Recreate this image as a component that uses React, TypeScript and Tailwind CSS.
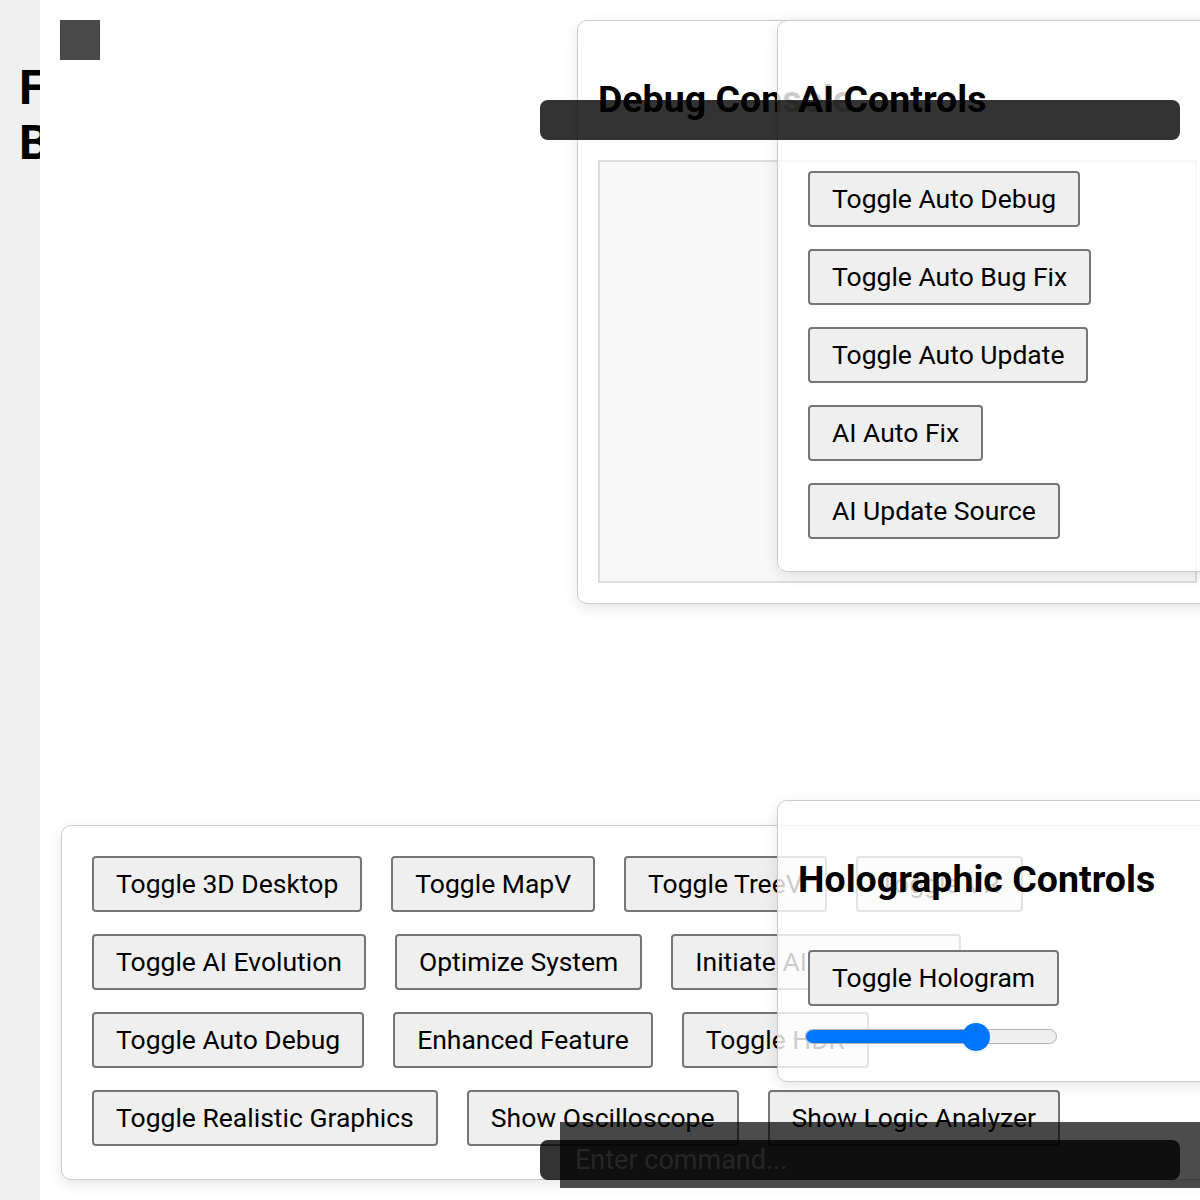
import React from 'react';

const btn =
  'shrink-0 whitespace-nowrap rounded-[4px] border-2 border-[#767676] bg-[#efefef] px-[22px] py-[11px] text-left text-[26.5px] leading-[30px] text-black';

const title = 'whitespace-nowrap text-[37.5px] font-bold leading-[44px]';

const aiButtons = ['Toggle Auto Debug', 'Toggle Auto Bug Fix', 'Toggle Auto Update', 'AI Auto Fix', 'AI Update Source'];

const toolButtons = [
  'Toggle 3D Desktop',
  'Toggle MapV',
  'Toggle TreeV',
  'Toggle VR',
  'Toggle AI Evolution',
  'Optimize System',
  'Initiate AI Singularity',
  'Toggle Auto Debug',
  'Enhanced Feature',
  'Toggle HDR',
  'Toggle Realistic Graphics',
  'Show Oscilloscope',
  'Show Logic Analyzer',
];

// floating window
const Panel = ({ className, children }: { className: string; children: React.ReactNode }) => (
  <section
    className={`absolute flex flex-col rounded-[10px] border border-[#cccccc] px-5 pb-5 pt-[56px] shadow-[0_4px_14px_rgba(0,0,0,0.1)] ${className}`}
  >
    {children}
  </section>
);

export default function App() {
  const hologramLevel = 70;

  return (
    <div className="relative flex h-[1200px] w-full overflow-hidden bg-white font-['Roboto',sans-serif] text-black">
      <aside className="w-[40px] shrink-0 overflow-hidden bg-[#f0f0f0] pl-[19px] pt-[60px]">
        <h2 className="text-[48px] font-bold leading-[55px]">File Browser</h2>
      </aside>

      <main className="flex-1 p-5">
        <div className="h-10 w-10 bg-[#4a4a4a]" />
      </main>

      {/* debug console */}
      <Panel className="left-[577px] top-[20px] w-[641px] bg-white">
        <h2 className={title}>Debug Console</h2>
        <div className="mt-[39px] h-[423px] border-2 border-[#dddddd] bg-[#f8f8f8]" />
      </Panel>

      {/* ai controls */}
      <Panel className="left-[777px] top-[20px] h-[552px] w-[460px] bg-white/80">
        <h2 className={title}>AI Controls</h2>
        <div className="mt-[50px] flex flex-col items-start gap-[22px] pl-[10px]">
          {aiButtons.map((b) => (
            <button key={b} className={btn}>
              {b}
            </button>
          ))}
        </div>
      </Panel>

      {/* tool buttons */}
      <div className="absolute left-[61px] top-[825px] h-[355px] w-[1170px] rounded-[10px] border border-[#cccccc] bg-white p-[30px] shadow-[0_4px_14px_rgba(0,0,0,0.1)]">
        <div className="flex flex-wrap gap-x-[29px] gap-y-[22px]">
          {toolButtons.map((b) => (
            <button key={b} className={btn}>
              {b}
            </button>
          ))}
        </div>
      </div>

      {/* holographic controls */}
      <Panel className="left-[777px] top-[800px] h-[282px] w-[460px] bg-white/80">
        <h2 className={title}>Holographic Controls</h2>
        <div className="mt-[49px] flex flex-col items-start gap-[23px]">
          <button className={`${btn} ml-[10px]`}>Toggle Hologram</button>
          <div className="relative ml-[7px] h-[15px] w-[252px] rounded-full border border-[#b2b2b2] bg-[#efefef]">
            <div className="h-full rounded-full bg-[#0075ff]" style={{ width: `${hologramLevel * 2.43}px` }} />
            <div
              className="absolute top-1/2 h-[28px] w-[28px] -translate-x-1/2 -translate-y-1/2 rounded-full bg-[#0075ff]"
              style={{ left: `${14 + hologramLevel * 2.23}px` }}
            />
          </div>
        </div>
      </Panel>

      {/* top overlay bar */}
      <div className="absolute left-[540px] top-[100px] h-10 w-[640px] rounded-lg bg-black/80" />

      {/* command strip */}
      <div className="absolute left-[560px] top-[1122px] h-[66px] w-[640px] bg-black/70" />
      <input
        placeholder="Enter command..."
        className="absolute left-[540px] top-[1140px] h-10 w-[640px] rounded-lg bg-black/80 pl-[35px] text-[27px] text-[#333] outline-none placeholder:text-[#262626]"
      />
    </div>
  );
}
